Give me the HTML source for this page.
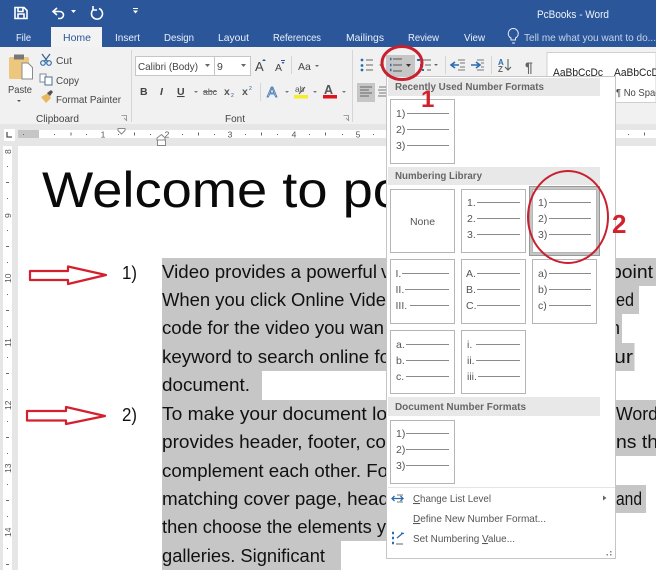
<!DOCTYPE html>
<html><head><meta charset="utf-8"><style>
html,body{margin:0;padding:0;background:#fff;width:656px;height:570px;overflow:hidden}
svg{display:block;font-family:"Liberation Sans",sans-serif;filter:blur(.3px)}
.b{font-size:18px;fill:#111}
.t{font-size:10.5px;fill:#eaf0fa}
.r{font-size:10.5px;fill:#444}
.m{font-size:10.5px;fill:#555}
.h{font-size:10px;font-weight:bold;fill:#666}
.l{font-size:10.5px;fill:#555}
.g{stroke:#8a8a8a;stroke-width:1;fill:none}
.box{fill:#fff;stroke:#b5b5b5;stroke-width:1}
.tk{font-size:8.5px;fill:#555}
</style></head><body>
<svg width="656" height="570" viewBox="0 0 656 570" xmlns="http://www.w3.org/2000/svg">
<rect width="656" height="570" fill="#fff"/>
<!-- title bar -->
<rect width="656" height="47" fill="#2b579a"/>
<g fill="none" stroke="#fff" stroke-width="1.6">
<path d="M15 7.500h9l3 3v8h-12z"/><path d="M18 8v3.500h5V8M18 18v-4h6v4"/>
<path d="M57 8l-4 3.500 4 3.500M53 11.500h7a3.500 3.500 0 0 1 0 7h-2"/>
<path d="M99 8.500a5.500 5.500 0 1 1-5 .5M93 6v4h4"/>
</g>
<path d="M71 10h5l-2.500 3zM133 10.500h5l-2.500 3z" fill="#fff"/><rect x="133" y="8" width="5" height="1" fill="#fff"/>
<text x="537" y="18" font-size="11" fill="#eef2fa" textLength="72" lengthAdjust="spacingAndGlyphs">PcBooks - Word</text>
<rect x="51" y="27" width="51" height="21" fill="#f3f3f3"/>
<text class="t" x="16" y="41" textLength="15" lengthAdjust="spacingAndGlyphs">File</text>
<text x="63" y="41" font-size="10.500" fill="#2b579a" textLength="28" lengthAdjust="spacingAndGlyphs">Home</text>
<text class="t" x="115" y="41" textLength="25" lengthAdjust="spacingAndGlyphs">Insert</text>
<text class="t" x="164" y="41" textLength="30" lengthAdjust="spacingAndGlyphs">Design</text>
<text class="t" x="218" y="41" textLength="31" lengthAdjust="spacingAndGlyphs">Layout</text>
<text class="t" x="273" y="41" textLength="48" lengthAdjust="spacingAndGlyphs">References</text>
<text class="t" x="346" y="41" textLength="38" lengthAdjust="spacingAndGlyphs">Mailings</text>
<text class="t" x="408" y="41" textLength="31" lengthAdjust="spacingAndGlyphs">Review</text>
<text class="t" x="464" y="41" textLength="21" lengthAdjust="spacingAndGlyphs">View</text>
<path d="M511 38a5 5 0 1 1 4.500 0v2h-4.500zM512 43h3" fill="none" stroke="#e6ecf7" stroke-width="1"/>
<text x="524" y="41" font-size="10.500" fill="#c6d3e9" textLength="132" lengthAdjust="spacingAndGlyphs">Tell me what you want to do...</text>
<!-- ribbon -->
<rect y="47" width="656" height="77" fill="#f1f1f1"/>
<rect y="124" width="656" height="22" fill="#e6e6e6"/>
<rect x="547" y="52.500" width="109" height="50" fill="#fff" stroke="#d0d0d0"/>
<!-- clipboard -->
<rect x="9" y="57" width="20" height="22" rx="1.500" fill="#eec77f"/>
<rect x="14" y="54.500" width="10" height="5" fill="#777"/>
<path d="M22 63h6l4.500 4.500v11.500H22z" fill="#fff" stroke="#8a8a8a"/>
<text class="r" x="8" y="93" textLength="24" lengthAdjust="spacingAndGlyphs">Paste</text>
<path d="M17 100h4l-2 2z" fill="#555"/>
<path d="M42 54l6 8M50 54l-6 8" stroke="#40668f" stroke-width="1.300" fill="none"/>
<circle cx="43" cy="63" r="2.300" fill="none" stroke="#2b6cb0" stroke-width="1.200"/><circle cx="49" cy="63" r="2.300" fill="none" stroke="#2b6cb0" stroke-width="1.200"/>
<text class="r" x="56" y="64" textLength="16" lengthAdjust="spacingAndGlyphs">Cut</text>
<rect x="40" y="74" width="6" height="8" fill="#fff" stroke="#7f8b97"/><rect x="45" y="77" width="7" height="8" fill="#fff" stroke="#4a6f96"/>
<text class="r" x="56" y="84" textLength="23" lengthAdjust="spacingAndGlyphs">Copy</text>
<path d="M41 97l7-4 3 5-5 5z" fill="#e8b85f"/><path d="M47 93l4-3 2 2-3 4z" fill="#555"/>
<text class="r" x="56" y="103" textLength="65" lengthAdjust="spacingAndGlyphs">Format Painter</text>
<text class="r" x="36" y="122" textLength="43" lengthAdjust="spacingAndGlyphs">Clipboard</text>
<path d="M121.500 115.500h5v5M124 118l3 3" fill="none" stroke="#888" stroke-width=".8"/>
<rect x="131" y="50" width="1" height="72" fill="#d6d6d6"/>
<!-- font -->
<rect x="135.500" y="56.500" width="79" height="19" fill="#fff" stroke="#c6c6c6"/>
<rect x="214.500" y="56.500" width="36" height="19" fill="#fff" stroke="#c6c6c6"/>
<text class="r" x="138" y="70" font-size="10.500" textLength="60" lengthAdjust="spacingAndGlyphs">Calibri (Body)</text>
<path d="M205 64h5l-2.500 3zM241 64h5l-2.500 3z" fill="#666"/>
<text class="r" x="217" y="70">9</text>
<text x="255" y="71" font-size="13" fill="#444">A</text><path d="M262 61l2-2 2 2z" fill="#2b579a"/>
<text x="275" y="71" font-size="10.500" fill="#444">A</text><rect x="281" y="60" width="4" height="1" fill="#2b579a"/><path d="M281.500 62h3l-1.500 2z" fill="#2b579a"/>
<rect x="291" y="56" width="1" height="18" fill="#d6d6d6"/>
<text class="r" x="298" y="70" font-size="11.500">Aa</text><path d="M315 65h4l-2 2z" fill="#666"/>
<text x="140" y="95" font-size="10.500" font-weight="bold" fill="#444">B</text>
<text x="160" y="95" font-size="10.500" font-style="italic" font-weight="bold" fill="#444">I</text>
<text x="177" y="95" font-size="10.500" font-weight="bold" fill="#444" text-decoration="underline">U</text>
<path d="M194 91h4l-2 2z" fill="#777"/>
<text x="203" y="95" font-size="9.500" fill="#555" textLength="14" lengthAdjust="spacingAndGlyphs">abc</text><rect x="203" y="91" width="14" height="1" fill="#777"/>
<text x="224" y="95" font-size="10.500" font-weight="bold" fill="#555">x</text><text x="231" y="97" font-size="5" fill="#2b579a">2</text>
<text x="242" y="95" font-size="10.500" font-weight="bold" fill="#555">x</text><text x="249" y="90" font-size="5" fill="#2b579a">2</text>
<rect x="260" y="83" width="1" height="18" fill="#d6d6d6"/>
<text x="267" y="97" font-size="15" fill="#cfe0f3" stroke="#3f74b5" stroke-width=".8">A</text><path d="M285 91h4l-2 2z" fill="#777"/>
<text x="295" y="92" font-size="8.500" fill="#555">ab</text><path d="M299 94l6-7" stroke="#555"/><rect x="294" y="95" width="14" height="3.500" fill="#f7ec2a"/><path d="M313 91h4l-2 2z" fill="#777"/>
<text x="324" y="94" font-size="12.500" font-weight="bold" fill="#555">A</text><rect x="323" y="95" width="14" height="3.500" fill="#e0141c"/><path d="M342 91h4l-2 2z" fill="#777"/>
<text class="r" x="225" y="122" textLength="20" lengthAdjust="spacingAndGlyphs">Font</text>
<path d="M343.500 115.500h5v5M346 118l3 3" fill="none" stroke="#888" stroke-width=".8"/>
<rect x="352" y="50" width="1" height="72" fill="#d6d6d6"/>
<!-- paragraph -->
<g fill="#2b6cb0"><circle cx="362" cy="60" r="1.400"/><circle cx="362" cy="65.500" r="1.400"/><circle cx="362" cy="70" r="1.400"/></g>
<path d="M366 60h7M366 65h7M366 70h7" stroke="#666" stroke-width="1"/>
<path d="M379 64.500h4l-2 2z" fill="#666"/>
<rect x="386" y="55" width="29" height="21" fill="#c6c6c6"/>
<path d="M390 59h2M390 65h2M390 70h2" stroke="#2b6cb0" stroke-width="2.500" stroke-dasharray="1.500 .5"/>
<path d="M393 59h9M393 65h9M393 71h9" stroke="#555" stroke-width="1"/>
<path d="M406 64h5l-2.500 3z" fill="#333"/>
<path d="M417 60h3M420 65h2M422 70h2" stroke="#2b6cb0" stroke-width="2"/>
<path d="M423 60h8M425 65h6M427 70h4" stroke="#666"/>
<path d="M434 64h4l-2 2z" fill="#666"/>
<rect x="445" y="56" width="1" height="18" fill="#d6d6d6"/>
<path d="M451 65h8M455 62l-4 3 4 3" fill="none" stroke="#2b6cb0" stroke-width="1.600"/>
<path d="M458 60h7M460 63h5M460 67h5M458 70h7" stroke="#777"/>
<path d="M471 65h8M476 62l4 3-4 3" fill="none" stroke="#2b6cb0" stroke-width="1.600"/>
<path d="M477 60h7M481 63h3M481 67h3M477 70h7" stroke="#777"/>
<rect x="491" y="56" width="1" height="18" fill="#d6d6d6"/>
<text x="498" y="65" font-size="8" font-weight="bold" fill="#2b6cb0">A</text><text x="498" y="72" font-size="8" font-weight="bold" fill="#666">Z</text>
<path d="M508 59v11M505 67l3 3 3-3" fill="none" stroke="#555"/>
<text x="525" y="72" font-size="14" font-weight="bold" fill="#666">¶</text>
<rect x="357" y="83" width="18" height="19" fill="#c6c6c6"/>
<path d="M360 87h12M360 90h9M360 93h12M360 96h9" stroke="#666"/>
<path d="M379 87h8M378 90h9M379 93h8M378 96h9" stroke="#777"/>
<text x="553" y="76" font-size="11" fill="#222" textLength="50" lengthAdjust="spacingAndGlyphs">AaBbCcDc</text>
<text x="614" y="76" font-size="11" fill="#222" textLength="50" lengthAdjust="spacingAndGlyphs">AaBbCcDc</text>
<text x="616" y="96" font-size="10.500" fill="#444" textLength="44" lengthAdjust="spacingAndGlyphs">¶ No Spac</text>
<!-- horizontal ruler -->
<rect x="18" y="130" width="638" height="8" fill="#fff"/>
<rect x="18" y="130" width="21" height="8" fill="#c6c6c6"/>
<rect x="4" y="129" width="11" height="12" fill="#fff"/>
<path d="M7 132v5h5" fill="none" stroke="#555" stroke-width="1.300"/>
<g fill="#666">
<rect x="23" y="134" width="1" height="1"/><rect x="54" y="134" width="1" height="1"/><rect x="70.500" y="132.500" width="1" height="3"/><rect x="86" y="134" width="1" height="1"/>
<rect x="118" y="134" width="1" height="1"/><rect x="134" y="132.500" width="1" height="3"/><rect x="150" y="134" width="1" height="1"/>
<rect x="182" y="134" width="1" height="1"/><rect x="198" y="132.500" width="1" height="3"/><rect x="214" y="134" width="1" height="1"/>
<rect x="245" y="134" width="1" height="1"/><rect x="261" y="132.500" width="1" height="3"/><rect x="277" y="134" width="1" height="1"/>
<rect x="309" y="134" width="1" height="1"/><rect x="325" y="132.500" width="1" height="3"/><rect x="342" y="134" width="1" height="1"/>
<rect x="373" y="134" width="1" height="1"/><rect x="628" y="134" width="1" height="1"/><rect x="644" y="132.500" width="1" height="3"/>
</g>
<g class="tk" text-anchor="middle"><text class="tk" x="103" y="137.500">1</text><text class="tk" x="167" y="137.500">2</text><text class="tk" x="230" y="137.500">3</text><text class="tk" x="294" y="137.500">4</text><text class="tk" x="358" y="137.500">5</text></g>
<path d="M118 128.500h7v2l-3.500 3.500-3.500-3.500z" fill="#fff" stroke="#888"/>
<path d="M161.500 134.500l3.500 3.500v2h-8v-2z" fill="#fff" stroke="#888"/>
<rect x="157.500" y="140" width="8" height="5.500" fill="#fff" stroke="#888"/>
<!-- vertical ruler -->
<rect x="0" y="146" width="18" height="424" fill="#e6e6e6"/>
<rect x="3" y="146" width="9" height="424" fill="#fff"/>
<rect x="18" y="146" width="638" height="424" fill="#fff"/>
<g fill="#666">
<rect x="7" y="166" width="1" height="1"/><rect x="6" y="182" width="3" height="1"/><rect x="7" y="198" width="1" height="1"/>
<rect x="7" y="230" width="1" height="1"/><rect x="6" y="246" width="3" height="1"/><rect x="7" y="262" width="1" height="1"/>
<rect x="7" y="294" width="1" height="1"/><rect x="6" y="310" width="3" height="1"/><rect x="7" y="326" width="1" height="1"/>
<rect x="7" y="357" width="1" height="1"/><rect x="6" y="373" width="3" height="1"/><rect x="7" y="389" width="1" height="1"/>
<rect x="7" y="421" width="1" height="1"/><rect x="6" y="437" width="3" height="1"/><rect x="7" y="453" width="1" height="1"/>
<rect x="7" y="484" width="1" height="1"/><rect x="6" y="500" width="3" height="1"/><rect x="7" y="516" width="1" height="1"/>
<rect x="7" y="548" width="1" height="1"/><rect x="6" y="564" width="3" height="1"/>
</g>
<g>
<text class="tk" transform="translate(11,154) rotate(-90)">8</text>
<text class="tk" transform="translate(11,218) rotate(-90)">9</text>
<text class="tk" transform="translate(11,283) rotate(-90)">10</text>
<text class="tk" transform="translate(11,347) rotate(-90)">11</text>
<text class="tk" transform="translate(11,410) rotate(-90)">12</text>
<text class="tk" transform="translate(11,473) rotate(-90)">13</text>
<text class="tk" transform="translate(11,537) rotate(-90)">14</text>
</g>
<!-- selection -->
<path d="M162 258H656V286H639V314H622V343H634.500V371H262V400H656V456H386V485H646V513H386V541H341V570H162Z" fill="#c6c6c6"/>
<!-- title -->
<text x="42" y="207" font-size="50.500" fill="#0a0a0a" textLength="361" lengthAdjust="spacingAndGlyphs">Welcome to po</text>
<!-- body -->
<text class="b" x="122" y="279" textLength="15" lengthAdjust="spacingAndGlyphs">1)</text>
<text class="b" x="122" y="421" textLength="15" lengthAdjust="spacingAndGlyphs">2)</text>
<text class="b" x="162" y="278" textLength="215" lengthAdjust="spacingAndGlyphs">Video provides a powerful</text>
<text class="b" x="381" y="278">v</text>
<text class="b" x="162" y="306" textLength="224" lengthAdjust="spacingAndGlyphs">When you click Online Vide</text>
<text class="b" x="162" y="334" textLength="222" lengthAdjust="spacingAndGlyphs">code for the video you wan</text>
<text class="b" x="162" y="363" textLength="228" lengthAdjust="spacingAndGlyphs">keyword to search online fo</text>
<text class="b" x="162" y="391" textLength="88" lengthAdjust="spacingAndGlyphs">document.</text>
<text class="b" x="162" y="420" textLength="225" lengthAdjust="spacingAndGlyphs">To make your document lo</text>
<text class="b" x="162" y="448" textLength="224" lengthAdjust="spacingAndGlyphs">provides header, footer, co</text>
<text class="b" x="162" y="477" textLength="226" lengthAdjust="spacingAndGlyphs">complement each other. Fo</text>
<text class="b" x="162" y="505" textLength="227" lengthAdjust="spacingAndGlyphs">matching cover page, head</text>
<text class="b" x="162" y="533" textLength="224" lengthAdjust="spacingAndGlyphs">then choose the elements y</text>
<text class="b" x="162" y="562" textLength="163" lengthAdjust="spacingAndGlyphs">galleries. Significant</text>
<text class="b" x="611" y="278" textLength="42" lengthAdjust="spacingAndGlyphs">point</text>
<text class="b" x="616" y="306" textLength="18" lengthAdjust="spacingAndGlyphs">ed</text>
<text class="b" x="610" y="334" textLength="10" lengthAdjust="spacingAndGlyphs">n</text>
<text class="b" x="614" y="363" textLength="19" lengthAdjust="spacingAndGlyphs">ur</text>
<text class="b" x="616" y="420" textLength="42" lengthAdjust="spacingAndGlyphs">Word</text>
<text class="b" x="616" y="448" textLength="42" lengthAdjust="spacingAndGlyphs">ns th</text>
<text class="b" x="616" y="505" textLength="26" lengthAdjust="spacingAndGlyphs">and</text>
<!-- arrows -->
<path d="M30 271H68V266.500L106 275 68 284V280H30Z" fill="#fff" stroke="#d4202e" stroke-width="2.200" stroke-linejoin="round"/>
<path d="M27 411H66V407L105 416 66 424V420.500H27Z" fill="#fff" stroke="#d4202e" stroke-width="2.200" stroke-linejoin="round"/>
<!-- menu -->
<rect x="386.500" y="76.500" width="229" height="482" fill="#fff" stroke="#c6c6c6"/>
<rect x="388" y="78" width="212" height="18" fill="#e8e8e8"/>
<rect x="388" y="167" width="212" height="18" fill="#e8e8e8"/>
<rect x="388" y="397" width="212" height="19" fill="#e8e8e8"/>
<text class="h" x="395" y="90" textLength="149" lengthAdjust="spacingAndGlyphs">Recently Used Number Formats</text>
<text class="h" x="395" y="179" textLength="87" lengthAdjust="spacingAndGlyphs">Numbering Library</text>
<text class="h" x="395" y="410" textLength="131" lengthAdjust="spacingAndGlyphs">Document Number Formats</text>
<rect x="529.500" y="186.500" width="70" height="69" fill="#c6c6c6" stroke="#999"/>
<rect class="box" x="390.500" y="99.500" width="64" height="64"/>
<rect class="box" x="390.500" y="189.500" width="64" height="63"/>
<rect class="box" x="461.500" y="189.500" width="64" height="63"/>
<rect class="box" x="532.500" y="189.500" width="64" height="63"/>
<rect class="box" x="390.500" y="259.500" width="64" height="64"/>
<rect class="box" x="461.500" y="259.500" width="64" height="64"/>
<rect class="box" x="532.500" y="259.500" width="64" height="64"/>
<rect class="box" x="390.500" y="330.500" width="64" height="63"/>
<rect class="box" x="461.500" y="330.500" width="64" height="63"/>
<rect class="box" x="390.500" y="420.500" width="64" height="63"/>
<!-- box 1 -->
<path class="g" d="M407 113.500H449M407 129.500H449M407 145.500H449"/>
<text class="l" x="396" y="117">1)</text><text class="l" x="396" y="133">2)</text><text class="l" x="396" y="149">3)</text>
<text class="l" x="422.500" y="225" text-anchor="middle">None</text>
<path class="g" d="M477 202.500H520M477 218.500H520M477 234.500H520"/>
<text class="l" x="467" y="206">1.</text><text class="l" x="467" y="222">2.</text><text class="l" x="467" y="238">3.</text>
<path class="g" d="M549 202.500H591M549 218.500H591M549 234.500H591"/>
<text class="l" x="538" y="206">1)</text><text class="l" x="538" y="222">2)</text><text class="l" x="538" y="238">3)</text>
<path class="g" d="M402 273.500H449M405 289.500H449M410 305.500H449"/>
<text class="l" x="395.500" y="277">I.</text><text class="l" x="395.500" y="293">II.</text><text class="l" x="395.500" y="309">III.</text>
<path class="g" d="M477 273.500H520M477 289.500H520M477 305.500H520"/>
<text class="l" x="466" y="277">A.</text><text class="l" x="466" y="293">B.</text><text class="l" x="466" y="309">C.</text>
<path class="g" d="M549 273.500H591M549 289.500H591M549 305.500H591"/>
<text class="l" x="538" y="277">a)</text><text class="l" x="538" y="293">b)</text><text class="l" x="538" y="309">c)</text>
<path class="g" d="M406 344.500H449M406 360.500H449M406 376.500H449"/>
<text class="l" x="396" y="348">a.</text><text class="l" x="396" y="364">b.</text><text class="l" x="396" y="380">c.</text>
<path class="g" d="M476 344.500H520M476 360.500H520M478 376.500H520"/>
<text class="l" x="467" y="348">i.</text><text class="l" x="467" y="364">ii.</text><text class="l" x="467" y="380">iii.</text>
<path class="g" d="M406 433.500H449M406 449.500H449M406 465.500H449"/>
<text class="l" x="396" y="437">1)</text><text class="l" x="396" y="453">2)</text><text class="l" x="396" y="469">3)</text>
<rect x="388" y="487" width="227" height="1" fill="#e5e5e5"/>
<path d="M392 498.500h11M394.500 496l-2.500 2.500 2.500 2.500M400.500 496l2.500 2.500-2.500 2.500" fill="none" stroke="#2b6cb0" stroke-width="1.300"/>
<path d="M397 495h6M397 502h6" stroke="#777"/>
<text class="m" x="413" y="502" textLength="78" lengthAdjust="spacingAndGlyphs"><tspan text-decoration="underline">C</tspan>hange List Level</text>
<path d="M603 495.500l3.500 2.500-3.500 2.500z" fill="#666"/>
<text class="m" x="413" y="522" textLength="133" lengthAdjust="spacingAndGlyphs"><tspan text-decoration="underline">D</tspan>efine New Number Format...</text>
<text class="m" x="413" y="542" textLength="102" lengthAdjust="spacingAndGlyphs">Set Numbering <tspan text-decoration="underline">V</tspan>alue...</text>
<path d="M392 533h2M392 538h2M392 543h2" stroke="#2b6cb0" stroke-width="2.500"/>
<path d="M397 538l6-5M401 533l3 .5" stroke="#2b6cb0" stroke-width="1.300" fill="none"/>
<path d="M396 544h7" stroke="#666"/>
<g fill="#888"><rect x="610" y="551" width="1.500" height="1.500"/><rect x="606.500" y="554" width="1.500" height="1.500"/><rect x="610" y="554" width="1.500" height="1.500"/></g>
<!-- annotations -->
<ellipse cx="402" cy="63" rx="20" ry="16.500" fill="none" stroke="#c8202f" stroke-width="3"/>
<text x="421" y="107" font-size="24" font-weight="bold" fill="#d3202d">1</text>
<ellipse cx="568" cy="217" rx="40" ry="46" fill="none" stroke="#c8202f" stroke-width="2"/>
<text x="612" y="233" font-size="26" font-weight="bold" fill="#d3202d">2</text>
</svg>
</body></html>
